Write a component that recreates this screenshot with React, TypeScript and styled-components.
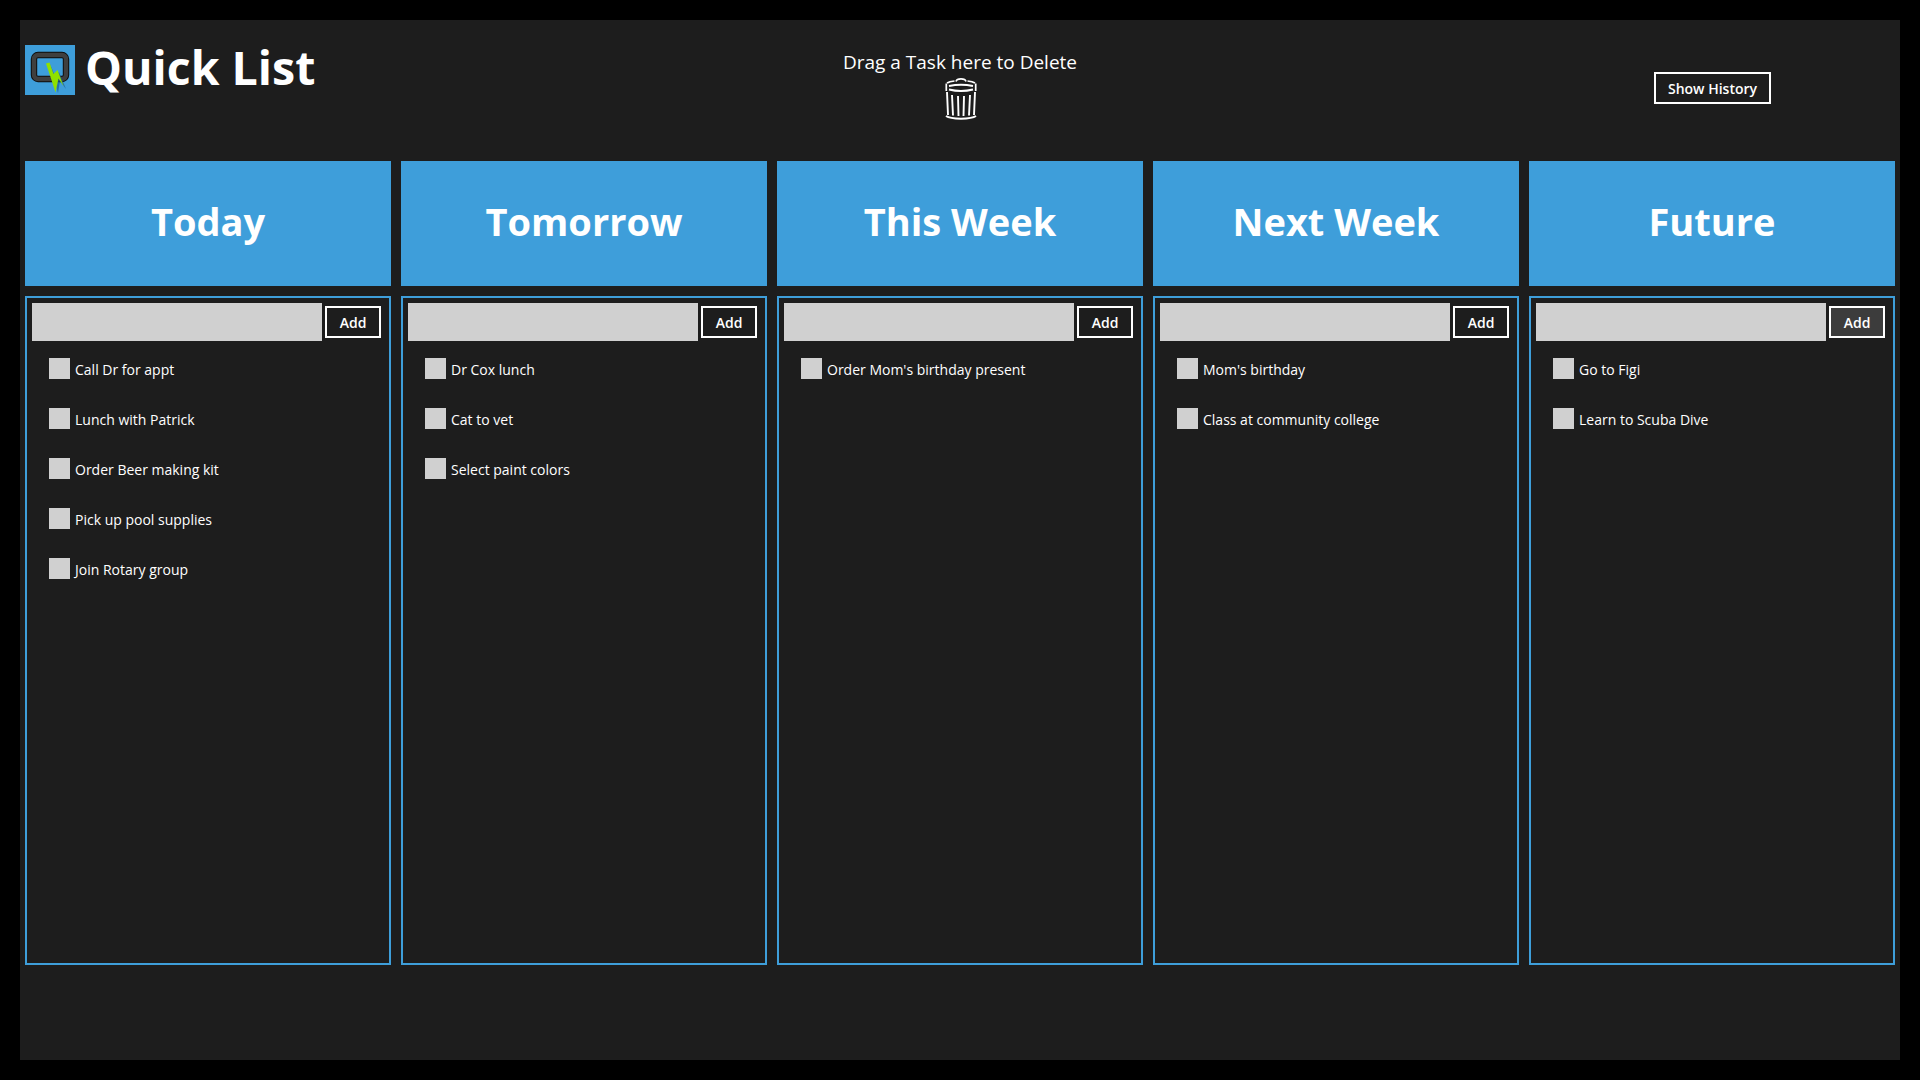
import React from 'react'
import styled, { createGlobalStyle } from 'styled-components'

const GlobalStyle = createGlobalStyle`
  html, body {
    margin: 0;
    background: #000;
    font-family: "Open Sans", "Noto Sans", sans-serif;
    color: #fff;
  }
  * { box-sizing: border-box; }
`

const Stage = styled.div`
  width: 1880px;
  height: 1040px;
  margin: 20px;
  padding: 0 5px;
  background: #1d1d1d;
  overflow: hidden;
`

const Grid = styled.div`
  display: grid;
  grid-template-columns: repeat(5, 366px);
  column-gap: 10px;
`

const Header = styled(Grid)`
  height: 141px;
`

const Brand = styled.div`
  grid-column: 1 / span 2;
  display: flex;
  align-items: flex-start;
  gap: 10px;
  padding-top: 25px;
`

const AppTitle = styled.h1`
  margin: 0;
  font-size: 46.5px;
  line-height: 44px;
  font-weight: 700;
`

const DeleteZone = styled.div`
  grid-column: 3;
  display: flex;
  flex-direction: column;
  align-items: center;
  padding-top: 29px;
`

const DeleteLabel = styled.div`
  font-size: 19px;
  line-height: 27px;
  height: 29px;
`

const TrashWrap = styled.div`
  padding-left: 2px;
  line-height: 0;
`

const HistoryCell = styled.div`
  grid-column: 5;
  display: flex;
  justify-content: center;
  padding-top: 52px;
  padding-left: 1px;
`

const OutlineButton = styled.button<{ $hover?: boolean }>`
  border: 2px solid #fff;
  background: ${(p) => (p.$hover ? '#3c3c3c' : 'transparent')};
  color: #fff;
  font-family: inherit;
  font-size: 14px;
  font-weight: 600;
  padding: 0;
  cursor: pointer;
`

const HistoryButton = styled(OutlineButton)`
  width: 117px;
  height: 32px;
`

const ColumnTitle = styled.div`
  height: 125px;
  padding-bottom: 6px;
  background: #3e9eda;
  display: flex;
  align-items: center;
  justify-content: center;
  font-size: 38px;
  font-weight: 700;
`

const Panel = styled.section`
  height: 669px;
  margin-top: 10px;
  padding: 5px;
  border: 2px solid #3e9eda;
`

const AddRow = styled.div`
  display: flex;
  align-items: center;
  gap: 3px;
`

const TaskInput = styled.input`
  width: 290px;
  height: 38px;
  border: 0;
  padding: 0 8px;
  background: #d0d0d0;
`

const AddButton = styled(OutlineButton)`
  width: 56px;
  height: 32px;
`

const TaskList = styled.ul`
  list-style: none;
  margin: 17px 0 0;
  padding: 0 0 0 17px;
  display: flex;
  flex-direction: column;
  gap: 29px;
`

const Task = styled.li`
  display: flex;
  align-items: center;
  gap: 5px;
  height: 21px;
  font-size: 14px;
`

const TaskLabel = styled.span`
  margin-top: 2px;
`

const CheckBox = styled.span`
  width: 21px;
  height: 21px;
  background: #d0d0d0;
  flex: none;
`

const Logo = () => (
  <svg width="50" height="50" viewBox="0 0 50 50">
    <rect width="50" height="50" fill="#3e9eda" />
    <rect x="9" y="10" width="32" height="24" rx="4" fill="none" stroke="#0e0e0e" strokeWidth="6.4" />
    <rect x="9" y="10" width="32" height="24" rx="4" fill="none" stroke="#3f3f3f" strokeWidth="4.4" />
    <polygon points="25,19 30,31 34,27 41,44 35,36 33,48 29,34" fill="#1c5f8f" opacity="0.7" />
    <polygon points="21,18.5 24.5,17.5 28.5,29 32.5,25 38.5,41 33.5,33.5 30.5,47.5 26,33.5" fill="#8fe000" />
  </svg>
)

const TrashIcon = () => (
  <svg width="32" height="44" viewBox="0 0 32 44" fill="none" stroke="#fff" strokeWidth="1.7">
    <path d="M11 3.4 C12 0 20 0 21 3.4" />
    <path d="M2 5 C4 3.6 7 3.2 9.5 3 M22.5 3 C25 3.2 28 3.6 30 5" />
    <path d="M1.3 5.5 V13 M30.7 5.5 V13" />
    <path d="M4 8 C12 6.3 20 6.3 28 8 M4 11.5 C12 13.5 20 13.5 28 11.5" strokeWidth="1.9" />
    <path d="M2 14 L3 37 M7 17 L8 37.5 M13 18 L13.5 38 M19 18 L18.5 38 M25 17 L24 37.5 M30 14 L29 37" strokeWidth="1.9" />
    <path d="M1 38 C6 41.5 26 41.5 31 38" strokeWidth="2" />
  </svg>
)

interface ColumnData {
  title: string
  tasks: string[]
}

const columns: ColumnData[] = [
  {
    title: 'Today',
    tasks: ['Call Dr for appt', 'Lunch with Patrick', 'Order Beer making kit', 'Pick up pool supplies', 'Join Rotary group'],
  },
  { title: 'Tomorrow', tasks: ['Dr Cox lunch', 'Cat to vet', 'Select paint colors'] },
  { title: 'This Week', tasks: ["Order Mom's birthday present"] },
  { title: 'Next Week', tasks: ["Mom's birthday", 'Class at community college'] },
  { title: 'Future', tasks: ['Go to Figi', 'Learn to Scuba Dive'] },
]

const App: React.FC = () => (
  <Stage>
    <GlobalStyle />
    <Header>
      <Brand>
        <Logo />
        <AppTitle>Quick List</AppTitle>
      </Brand>
      <DeleteZone>
        <DeleteLabel>Drag a Task here to Delete</DeleteLabel>
        <TrashWrap>
          <TrashIcon />
        </TrashWrap>
      </DeleteZone>
      <HistoryCell>
        <HistoryButton>Show History</HistoryButton>
      </HistoryCell>
    </Header>
    <Grid>
      {columns.map((c) => (
        <ColumnTitle key={c.title}>{c.title}</ColumnTitle>
      ))}
      {columns.map((c, i) => (
        <Panel key={c.title}>
          <AddRow>
            <TaskInput />
            <AddButton $hover={i === 4}>Add</AddButton>
          </AddRow>
          <TaskList>
            {c.tasks.map((t) => (
              <Task key={t}>
                <CheckBox />
                <TaskLabel>{t}</TaskLabel>
              </Task>
            ))}
          </TaskList>
        </Panel>
      ))}
    </Grid>
  </Stage>
)

export default App
